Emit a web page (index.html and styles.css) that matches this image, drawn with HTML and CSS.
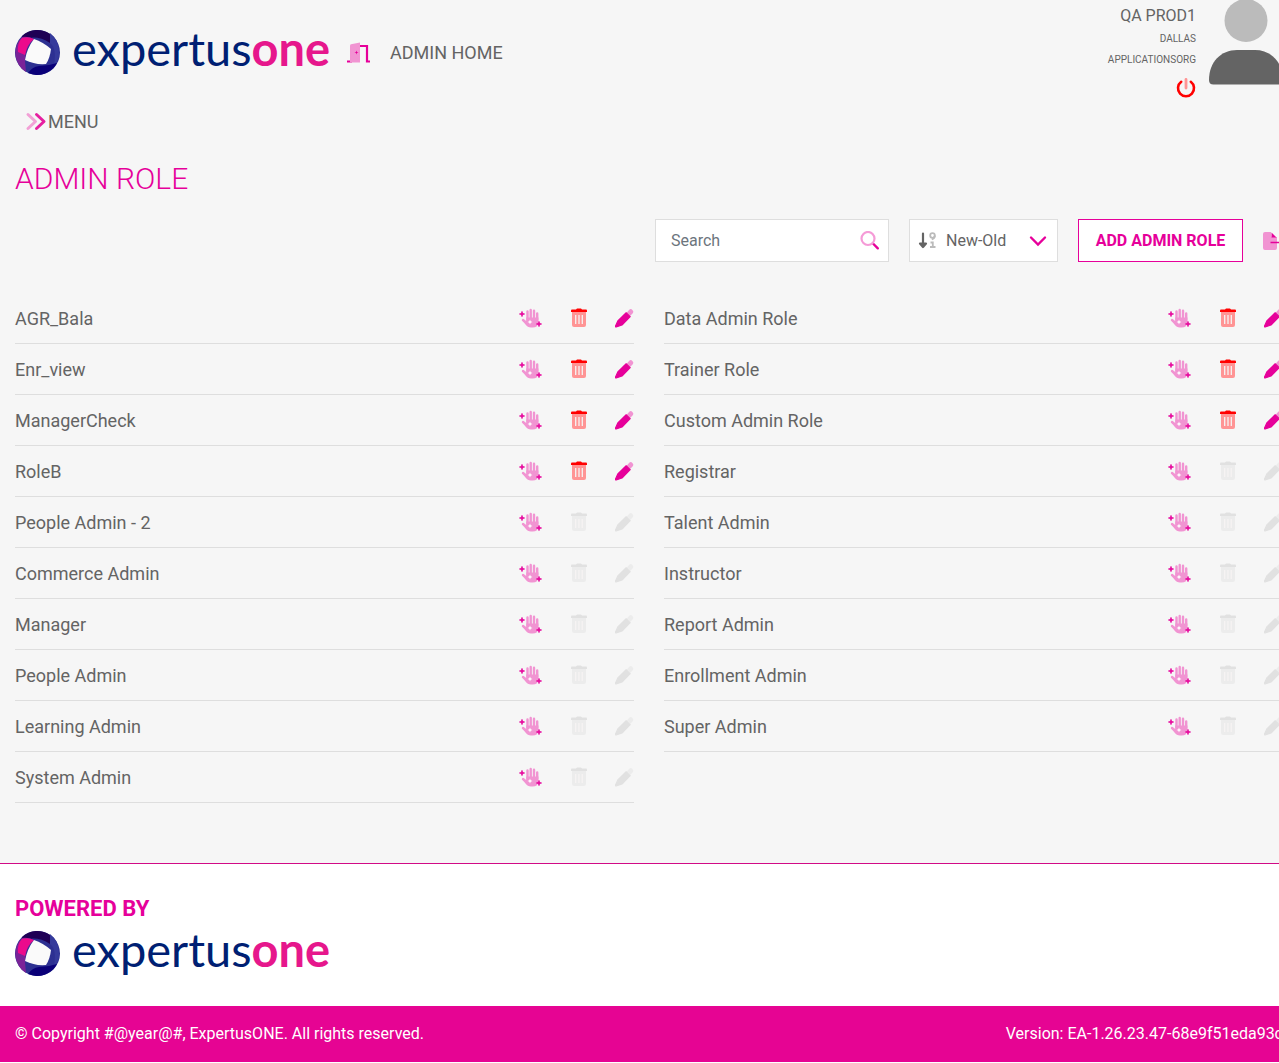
FILE: index.html
```html
<!DOCTYPE html>
<html lang="en">
<head>
<meta charset="utf-8">
<meta name="viewport" content="width=device-width, initial-scale=1">
<title>Admin Role</title>
<link rel="stylesheet" href="styles.css">
</head>
<body>
<svg class="sprite" aria-hidden="true">
  <symbol id="mark" viewBox="0 0 45 45">
    <circle cx="22.500" cy="22.500" r="22.500" fill="#2d3092"/>
    <path d="M7 6A22.500 22.500 0 0 1 35 4Q36 8 35 13Q21 4 7 10Z" fill="#1f0055"/>
    <path d="M35 3Q44 10 44 22Q45 30 39 35Q42 18 35 13Z" fill="#353a9b"/>
    <path d="M42 33A22.500 22.500 0 0 1 13 43Q17 37 24 36Q33 36 42 33Z" fill="#0a0078"/>
    <path d="M7 7Q13 6 19 9Q10 17 10 31L11 42A22.500 22.500 0 0 1 7 7Z" fill="#7a2398"/>
    <path d="M7 8Q13 6 19 9Q12 14 10 25L3 22Q2 13 7 8Z" fill="#ec0a8c"/>
    <path d="M19 9Q28 12 36 19Q35 28 31 34Q20 35 10 30Q12 18 19 9Z" class="mark-hole"/>
  </symbol>
  <symbol id="hand" viewBox="0 0 24 20">
    <g fill="none" stroke="#f194d2" stroke-width="2.400" stroke-linecap="round"><path d="M8.500 12V3.500M11.700 11V2M15 11V2.800M18.200 12V5.500M4 12l3.500 3"/></g>
    <path d="M7.300 9.500h12.100V14q0 5.500-6 5.500H12q-3.500 0-5.500-3L3.500 12.500l3.800.5z" fill="#f194d2"/>
    <path d="M11 11.500l.7 1.800 1.800.7-1.800.7-.7 1.800-.7-1.800-1.800-.7 1.800-.7z" fill="#fff"/>
    <path d="M3 3.300l.7 2L5.700 6l-2 .7-.7 2-.7-2L.3 6l2-.7zM20 13.300l.7 2 2 .7-2 .7-.7 2-.7-2-2-.7 2-.7z" fill="#e6009a" stroke="#e6009a" stroke-width=".6"/>
  </symbol>
  <symbol id="trash" viewBox="0 0 18 20">
    <path d="M2 4h14v13q0 2-2 2H4q-2 0-2-2z" fill="var(--soft)"/>
    <path d="M5.700 7v9M9 7v9M12.300 7v9" stroke="#f6f3f3" stroke-width="1.300"/>
    <path d="M1 2.800Q1 1.500 2 1.500h4L7 .5h4l1 1h4q1 0 1 1.300V4H1z" fill="var(--strong)"/>
  </symbol>
  <symbol id="pencil" viewBox="0 0 19 20">
    <path d="M11.800 4.500L14.500 1.600q1.300-1.200 2.900.3t.6 3.200l-2.700 2.700z" fill="var(--soft)"/>
    <path d="M11.200 4.800L15.200 8.600 7 17 1.200 19q-.9 0-.7-.9L2.800 13z" fill="var(--strong)" stroke="var(--strong)" stroke-width="1.200" stroke-linejoin="round"/>
  </symbol>
</svg>

<div class="page">
  <header class="top">
    <a class="logo" href="#" aria-label="expertusone">
      <svg class="logo-mark"><use href="#mark"/></svg>
      <span class="logo-text">expertus<b>one</b></span>
    </a>
    <a class="home" href="#">
      <svg width="24" height="22" viewBox="0 0 24 22" aria-hidden="true"><path d="M12 4h8v15.500h3M0 19.500h5" fill="none" stroke="#e6009a" stroke-width="2.200"/><path d="M3 3.500q0-1 1-1.300L13 .5V20.500H3z" fill="#f194d2"/><path d="M9.500 8.500l.5 1.500 1.500.5-1.500.5-.5 1.500-.5-1.500-1.500-.5 1.500-.5z" fill="#e6009a"/></svg>
      <span>ADMIN HOME</span>
    </a>
    <div class="user">
      <div class="user-info">
        <span class="user-name">QA PROD1</span>
        <span class="user-org">DALLAS</span>
        <span class="user-org">APPLICATIONSORG</span>
        <button class="icon-btn power" aria-label="Log out"><svg width="20" height="20" viewBox="0 0 20 20"><path d="M5.200 3.800a8 8 0 1 0 9.600 0" fill="none" stroke="#f00" stroke-width="2.600" stroke-linecap="round"/><path d="M10 1.500v8.500" stroke="#ff9494" stroke-width="2.800" stroke-linecap="round"/></svg></button>
      </div>
      <svg class="avatar" viewBox="0 0 74 85" aria-hidden="true"><circle cx="37" cy="20.500" r="21.500" fill="#bbb"/><path d="M0 80C0 62 12 50 28 50h18c16 0 28 12 28 30q0 4.500-4.500 4.500h-65Q0 84.500 0 80z" fill="#646464"/></svg>
    </div>
  </header>

  <button class="menu"><svg width="23" height="20" viewBox="0 0 23 20" aria-hidden="true"><g fill="none" stroke-width="3" stroke-linecap="round" stroke-linejoin="round"><path d="M3 2.500l7.500 7-7.500 7" stroke="#f2a0d6"/><path d="M11.500 2.500l7.500 7-7.500 7" stroke="#e61fa0"/></g></svg>MENU</button>

  <main>
    <h1>ADMIN ROLE</h1>
    <div class="toolbar">
      <form class="search">
        <input type="text" placeholder="Search" aria-label="Search">
        <button class="icon-btn" type="button" aria-label="Search"><svg width="20" height="20" viewBox="0 0 20 20"><path d="M13 12.500l4.800 4.800" stroke="#e6009a" stroke-width="2.400" stroke-linecap="round"/><circle cx="8" cy="7.500" r="6.500" fill="none" stroke="#f59bd7" stroke-width="2.200"/></svg></button>
      </form>
      <label class="sort">
        <svg width="20" height="18" viewBox="0 0 20 18" aria-hidden="true"><path d="M5 1.500v12M2 11.500L5 15 8 11.500z" fill="#646464" stroke="#646464" stroke-width="2.200" stroke-linecap="round" stroke-linejoin="round"/><g fill="none" stroke="#bbb" stroke-width="1.800"><circle cx="14.500" cy="3.500" r="2.300"/><path d="M16.800 3.500q0 3-3 4M12.500 10.500h2.300V15M12 15h5.500"/></g></svg>
        <select aria-label="Sort order"><option>New-Old</option><option>Old-New</option></select>
        <svg width="18" height="12" viewBox="0 0 18 12" aria-hidden="true"><path d="M2 2.500l7 7 7-7" fill="none" stroke="#e6009a" stroke-width="2.400" stroke-linecap="round"/></svg>
      </label>
      <button class="add">ADD ADMIN ROLE</button>
      <button class="icon-btn" aria-label="Export"><svg width="20" height="20" viewBox="0 0 20 20"><path d="M0 3q0-2 2-2h6v4q0 1 1 1h5v11q0 2-2 2H2q-2 0-2-2z" fill="#f194d2"/><path d="M8.500 1.500L13.500 6.500h-5z" fill="#e6009a"/><path d="M7.500 11.500H19M17 9.500l2 2-2 2" fill="none" stroke="#e6009a" stroke-width="1.600"/></svg></button>
    </div>

    <div class="roles">
      <ul>
        <li><span>AGR_Bala</span><button class="icon-btn hand" aria-label="Permissions"><svg><use href="#hand"/></svg></button><button class="icon-btn trash" aria-label="Delete"><svg><use href="#trash"/></svg></button><button class="icon-btn pencil" aria-label="Edit"><svg><use href="#pencil"/></svg></button></li>
        <li><span>Enr_view</span><button class="icon-btn hand" aria-label="Permissions"><svg><use href="#hand"/></svg></button><button class="icon-btn trash" aria-label="Delete"><svg><use href="#trash"/></svg></button><button class="icon-btn pencil" aria-label="Edit"><svg><use href="#pencil"/></svg></button></li>
        <li><span>ManagerCheck</span><button class="icon-btn hand" aria-label="Permissions"><svg><use href="#hand"/></svg></button><button class="icon-btn trash" aria-label="Delete"><svg><use href="#trash"/></svg></button><button class="icon-btn pencil" aria-label="Edit"><svg><use href="#pencil"/></svg></button></li>
        <li><span>RoleB</span><button class="icon-btn hand" aria-label="Permissions"><svg><use href="#hand"/></svg></button><button class="icon-btn trash" aria-label="Delete"><svg><use href="#trash"/></svg></button><button class="icon-btn pencil" aria-label="Edit"><svg><use href="#pencil"/></svg></button></li>
        <li><span>People Admin - 2</span><button class="icon-btn hand" aria-label="Permissions"><svg><use href="#hand"/></svg></button><button class="icon-btn trash" disabled aria-label="Delete"><svg><use href="#trash"/></svg></button><button class="icon-btn pencil" disabled aria-label="Edit"><svg><use href="#pencil"/></svg></button></li>
        <li><span>Commerce Admin</span><button class="icon-btn hand" aria-label="Permissions"><svg><use href="#hand"/></svg></button><button class="icon-btn trash" disabled aria-label="Delete"><svg><use href="#trash"/></svg></button><button class="icon-btn pencil" disabled aria-label="Edit"><svg><use href="#pencil"/></svg></button></li>
        <li><span>Manager</span><button class="icon-btn hand" aria-label="Permissions"><svg><use href="#hand"/></svg></button><button class="icon-btn trash" disabled aria-label="Delete"><svg><use href="#trash"/></svg></button><button class="icon-btn pencil" disabled aria-label="Edit"><svg><use href="#pencil"/></svg></button></li>
        <li><span>People Admin</span><button class="icon-btn hand" aria-label="Permissions"><svg><use href="#hand"/></svg></button><button class="icon-btn trash" disabled aria-label="Delete"><svg><use href="#trash"/></svg></button><button class="icon-btn pencil" disabled aria-label="Edit"><svg><use href="#pencil"/></svg></button></li>
        <li><span>Learning Admin</span><button class="icon-btn hand" aria-label="Permissions"><svg><use href="#hand"/></svg></button><button class="icon-btn trash" disabled aria-label="Delete"><svg><use href="#trash"/></svg></button><button class="icon-btn pencil" disabled aria-label="Edit"><svg><use href="#pencil"/></svg></button></li>
        <li><span>System Admin</span><button class="icon-btn hand" aria-label="Permissions"><svg><use href="#hand"/></svg></button><button class="icon-btn trash" disabled aria-label="Delete"><svg><use href="#trash"/></svg></button><button class="icon-btn pencil" disabled aria-label="Edit"><svg><use href="#pencil"/></svg></button></li>
      </ul>
      <ul>
        <li><span>Data Admin Role</span><button class="icon-btn hand" aria-label="Permissions"><svg><use href="#hand"/></svg></button><button class="icon-btn trash" aria-label="Delete"><svg><use href="#trash"/></svg></button><button class="icon-btn pencil" aria-label="Edit"><svg><use href="#pencil"/></svg></button></li>
        <li><span>Trainer Role</span><button class="icon-btn hand" aria-label="Permissions"><svg><use href="#hand"/></svg></button><button class="icon-btn trash" aria-label="Delete"><svg><use href="#trash"/></svg></button><button class="icon-btn pencil" aria-label="Edit"><svg><use href="#pencil"/></svg></button></li>
        <li><span>Custom Admin Role</span><button class="icon-btn hand" aria-label="Permissions"><svg><use href="#hand"/></svg></button><button class="icon-btn trash" aria-label="Delete"><svg><use href="#trash"/></svg></button><button class="icon-btn pencil" aria-label="Edit"><svg><use href="#pencil"/></svg></button></li>
        <li><span>Registrar</span><button class="icon-btn hand" aria-label="Permissions"><svg><use href="#hand"/></svg></button><button class="icon-btn trash" disabled aria-label="Delete"><svg><use href="#trash"/></svg></button><button class="icon-btn pencil" disabled aria-label="Edit"><svg><use href="#pencil"/></svg></button></li>
        <li><span>Talent Admin</span><button class="icon-btn hand" aria-label="Permissions"><svg><use href="#hand"/></svg></button><button class="icon-btn trash" disabled aria-label="Delete"><svg><use href="#trash"/></svg></button><button class="icon-btn pencil" disabled aria-label="Edit"><svg><use href="#pencil"/></svg></button></li>
        <li><span>Instructor</span><button class="icon-btn hand" aria-label="Permissions"><svg><use href="#hand"/></svg></button><button class="icon-btn trash" disabled aria-label="Delete"><svg><use href="#trash"/></svg></button><button class="icon-btn pencil" disabled aria-label="Edit"><svg><use href="#pencil"/></svg></button></li>
        <li><span>Report Admin</span><button class="icon-btn hand" aria-label="Permissions"><svg><use href="#hand"/></svg></button><button class="icon-btn trash" disabled aria-label="Delete"><svg><use href="#trash"/></svg></button><button class="icon-btn pencil" disabled aria-label="Edit"><svg><use href="#pencil"/></svg></button></li>
        <li><span>Enrollment Admin</span><button class="icon-btn hand" aria-label="Permissions"><svg><use href="#hand"/></svg></button><button class="icon-btn trash" disabled aria-label="Delete"><svg><use href="#trash"/></svg></button><button class="icon-btn pencil" disabled aria-label="Edit"><svg><use href="#pencil"/></svg></button></li>
        <li><span>Super Admin</span><button class="icon-btn hand" aria-label="Permissions"><svg><use href="#hand"/></svg></button><button class="icon-btn trash" disabled aria-label="Delete"><svg><use href="#trash"/></svg></button><button class="icon-btn pencil" disabled aria-label="Edit"><svg><use href="#pencil"/></svg></button></li>
      </ul>
    </div>
  </main>

  <footer>
    <div class="powered">
      <h2>POWERED BY</h2>
      <a class="logo" href="#" aria-label="expertusone">
        <svg class="logo-mark"><use href="#mark"/></svg>
        <span class="logo-text">expertus<b>one</b></span>
      </a>
    </div>
    <div class="legal">
      <span>© Copyright #@year@#, ExpertusONE. All rights reserved.</span>
      <span>Version: EA-1.26.23.47-68e9f51eda93c</span>
    </div>
  </footer>
</div>
</body>
</html>
```
FILE: styles.css
```css
* { box-sizing: border-box; }

html { background: #fff; }

body {
  margin: 0;
  overflow: hidden;
  color: #646464;
  font: 16px/24px Roboto, "Liberation Sans", sans-serif;
}

/* the content row is a gutter wider than the window */
.page {
  width: calc(100% + 19px);
  background: #f6f6f6;
}

.sprite { position: absolute; width: 0; height: 0; }

svg { display: block; flex: none; }
a { color: inherit; text-decoration: none; }
button, input, select { font: inherit; color: inherit; }
button { padding: 0; border: 0; background: none; cursor: pointer; }
.icon-btn { display: block; flex: none; }

.top {
  display: flex;
  align-items: flex-start;
  padding: 0 15px;
}

.logo { display: flex; align-items: center; gap: 12px; height: 45px; width: 314px; }
.top .logo { margin-top: 30px; }
.logo-mark { width: 45px; height: 45px; }
.mark-hole { fill: #fafafa; }
.logo-text {
  color: #001f73;
  font: 47px/40px Lato, sans-serif;
  padding-bottom: 10px;
  white-space: nowrap;
}
.logo-text b { color: #e6178c; }

.home {
  display: flex;
  align-items: center;
  gap: 19px;
  margin: 41px 0 0 18px;
  font-size: 18px;
}

.user { display: flex; gap: 13px; margin-left: auto; }
.user-info { display: flex; flex-direction: column; align-items: flex-end; }
.user-name { font-size: 16px; line-height: 32px; height: 28px; }
.user-org { font-size: 10px; line-height: 21px; }
.power { margin-top: 8px; }
.avatar { width: 74px; height: 85px; }

.menu {
  display: flex;
  align-items: center;
  margin: 12px 0 0 25px;
  font-size: 18px;
}

main { padding: 24px 15px 60px; }

h1 {
  margin: 0;
  color: #e6009a;
  font-size: 30px;
  font-weight: 300;
  line-height: 42px;
}

.toolbar {
  display: flex;
  justify-content: flex-end;
  align-items: center;
  gap: 20px;
  margin: 19px 0 31px;
}

.search, .sort {
  display: flex;
  align-items: center;
  height: 43px;
  border: 1px solid #dedede;
  background: #fff;
}
.search { width: 234px; padding: 0 8px 0 15px; }
.search input { flex: 1; min-width: 0; padding: 0; border: 0; outline: 0; background: none; }
.search input::placeholder { color: #6c757d; }
.sort { width: 149px; padding: 0 10px 0 8px; gap: 8px; }
.sort select { flex: 1; min-width: 0; padding: 0; border: 0; appearance: none; background: none; }

.add {
  width: 165px;
  height: 43px;
  border: 1px solid #e6009a;
  background: #fff;
  color: #e6009a;
  font-weight: 700;
}

.roles { display: grid; grid-template-columns: 1fr 1fr; gap: 30px; }
.roles ul { margin: 0; padding: 0; list-style: none; }
.roles li {
  display: flex;
  align-items: center;
  gap: 27px;
  height: 51px;
  border-bottom: 1px solid #dedede;
  font-size: 18px;
}
.roles li span { flex: 1; line-height: 26px; padding-top: 2px; }
.hand svg { width: 24px; height: 20px; }
.trash svg { width: 18px; height: 20px; }
.pencil svg { width: 19px; height: 20px; }
.trash { --soft: #ff9494; --strong: #f00; }
.pencil { --soft: #f194d2; --strong: #e6009a; }
.trash:disabled, .pencil:disabled { --soft: #ececec; --strong: #e1e1e1; }

.powered {
  height: 143px;
  padding: 33px 15px 0;
  border-top: 1px solid #d10a86;
  background: #fff;
}
.powered h2 {
  margin: 0 0 10px;
  color: #e6009a;
  font-size: 22px;
  line-height: 24px;
}

.legal {
  display: flex;
  justify-content: space-between;
  padding: 16px 15px;
  background: #e60493;
  color: #fff;
  white-space: nowrap;
}
```
